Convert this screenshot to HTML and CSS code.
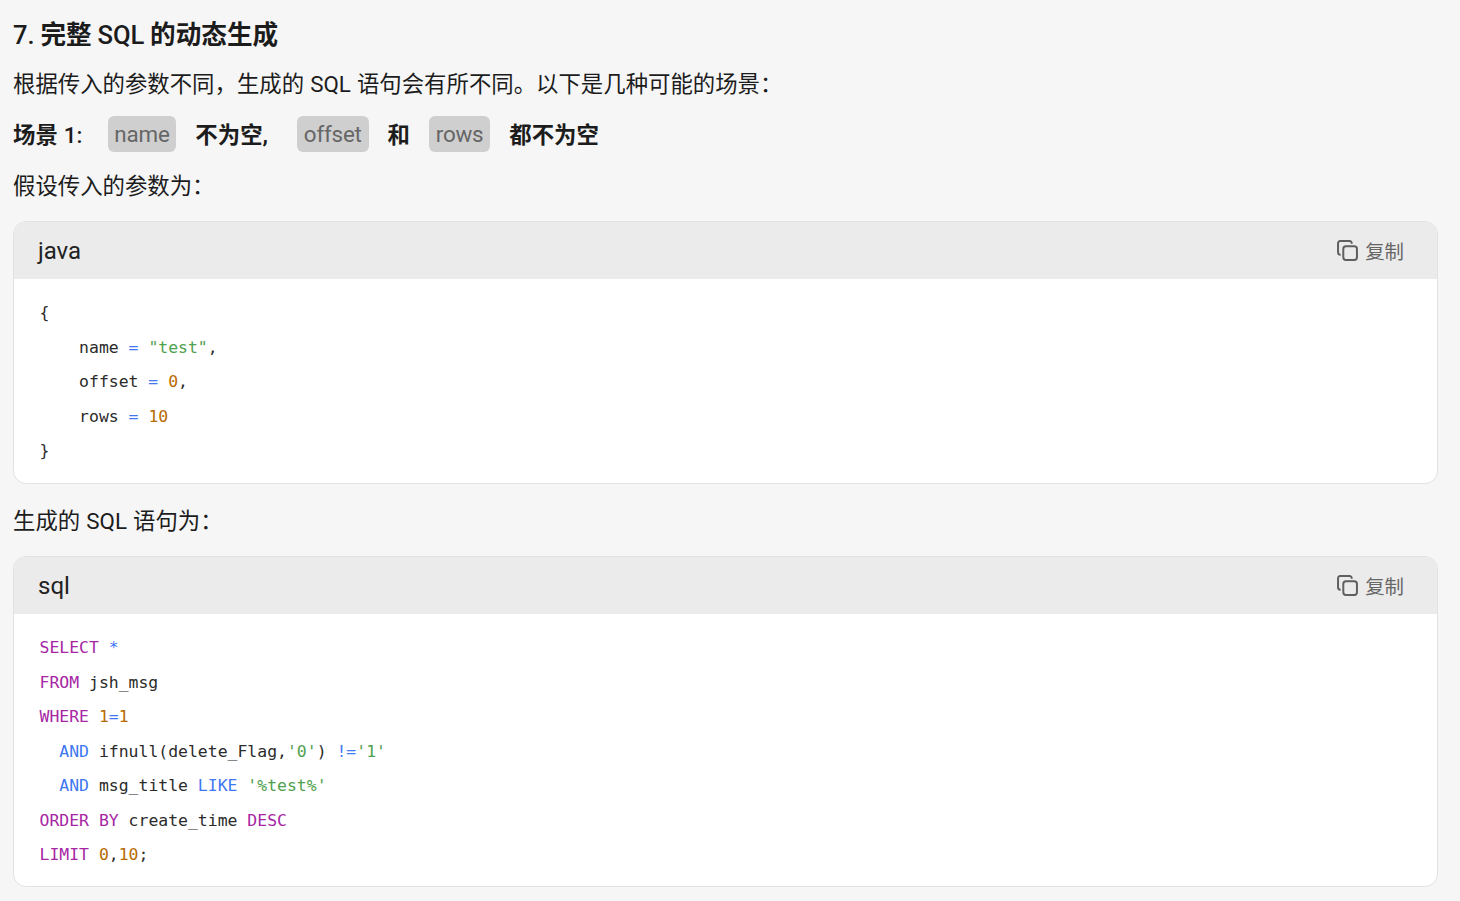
FILE: index.html
```html
<!DOCTYPE html>
<html lang="zh-CN">
<head>
<meta charset="utf-8">
<title>完整 SQL 的动态生成</title>
<link rel="stylesheet" href="styles.css">
</head>
<body>
<main class="doc">
<h3 class="heading"><span class="latin">7.</span> 完整 <span class="latin">SQL</span> 的动态生成</h3>
<p class="para">根据传入的参数不同，生成的 SQL 语句会有所不同。以下是几种可能的场景：</p>
<p class="para scene"><strong class="punct">场景 <span class="latin">1:</span></strong><code class="tag">name</code><strong class="punct-wide">不为空,</strong><code class="tag">offset</code><strong>和</strong><code class="tag">rows</code><strong>都不为空</strong></p>
<p class="para">假设传入的参数为：</p>
<section class="block">
<header class="block-head"><span class="lang">java</span><span class="copy"><svg class="copy-icon" viewBox="0 0 20 20" aria-hidden="true"><rect x="6" y="6" width="13" height="13" rx="2.5"/><path d="M14 3.5V3a2 2 0 0 0-2-2H3a2 2 0 0 0-2 2v9a2 2 0 0 0 2 2h.5"/></svg>复制</span></header>
<pre class="code">{
    name <i class="op">=</i> <i class="str">"test"</i>,
    offset <i class="op">=</i> <i class="num">0</i>,
    rows <i class="op">=</i> <i class="num">10</i>
}</pre>
</section>
<p class="para after">生成的 SQL 语句为：</p>
<section class="block">
<header class="block-head"><span class="lang">sql</span><span class="copy"><svg class="copy-icon" viewBox="0 0 20 20" aria-hidden="true"><rect x="6" y="6" width="13" height="13" rx="2.5"/><path d="M14 3.5V3a2 2 0 0 0-2-2H3a2 2 0 0 0-2 2v9a2 2 0 0 0 2 2h.5"/></svg>复制</span></header>
<pre class="code code-tight"><i class="kw">SELECT</i> <i class="op">*</i>
<i class="kw">FROM</i> jsh_msg
<i class="kw">WHERE</i> <i class="num">1</i><i class="op">=</i><i class="num">1</i>
  <i class="op">AND</i> ifnull(delete_Flag,<i class="str">'0'</i>) <i class="op">!=</i><i class="str">'1'</i>
  <i class="op">AND</i> msg_title <i class="op">LIKE</i> <i class="str">'%test%'</i>
<i class="kw">ORDER</i> <i class="kw">BY</i> create_time <i class="kw">DESC</i>
<i class="kw">LIMIT</i> <i class="num">0</i>,<i class="num">10</i>;</pre>
</section>
</main>
</body>
</html>
```
FILE: styles.css
```css
html, body {
  margin: 0;
  height: 100%;
  overflow: hidden;
  background: #f6f6f6;
}
body {
  font-family: Roboto, "Noto Sans CJK SC", sans-serif;
  color: #1c1c1c;
}
.doc {
  padding: 12px 22px 0 13px;
}
.heading {
  margin: 0 0 6px;
  font-size: 25.6px;
  line-height: 46px;
  font-weight: 700;
  word-spacing: -0.6px;
}
.latin { font-weight: 500; }
.para {
  margin: 0 0 10px;
  font-size: 22.4px;
  line-height: 41px;
  word-spacing: 0.5px;
}
.scene {
  display: flex;
  align-items: flex-start;
  gap: 19px;
  height: 41px;
}
.punct { margin-right: 6px; }
.punct-wide { margin-right: 10px; }
.tag {
  font-family: inherit;
  font-size: 22.4px;
  line-height: 36px;
  height: 36px;
  margin-top: 1px;
  padding: 0 6.8px;
  background: #cfcfcf;
  color: #666;
  border-radius: 6px;
  letter-spacing: -0.2px;
}
.block {
  border: 1px solid #e2e2e2;
  border-radius: 13px;
  overflow: hidden;
  background: #fff;
  margin-top: 14px;
}
.block-head {
  display: flex;
  justify-content: space-between;
  align-items: center;
  height: 57px;
  padding: 0 33px 0 24px;
  background: #ebebeb;
}
.lang {
  font-size: 24px;
  color: #222;
}
.copy {
  display: flex;
  align-items: center;
  gap: 7px;
  font-size: 19.4px;
  color: #666;
}
.copy-icon {
  width: 21px;
  height: 21px;
  fill: none;
  stroke: #5f5f5f;
  stroke-width: 1.9;
}
.code {
  margin: 0;
  padding: 17px 26px 14.5px 25.5px;
  font-family: "DejaVu Sans Mono", monospace;
  font-size: 16.45px;
  line-height: 34.5px;
  color: #2b2b2b;
}
.code-tight { padding-bottom: 13.5px; }
.code i { font-style: normal; }
.kw { color: #a626a4; }
.op { color: #4078f2; }
.str { color: #50a14f; }
.num { color: #b76b01; }
.after { margin: 17px 0 0; }
```
